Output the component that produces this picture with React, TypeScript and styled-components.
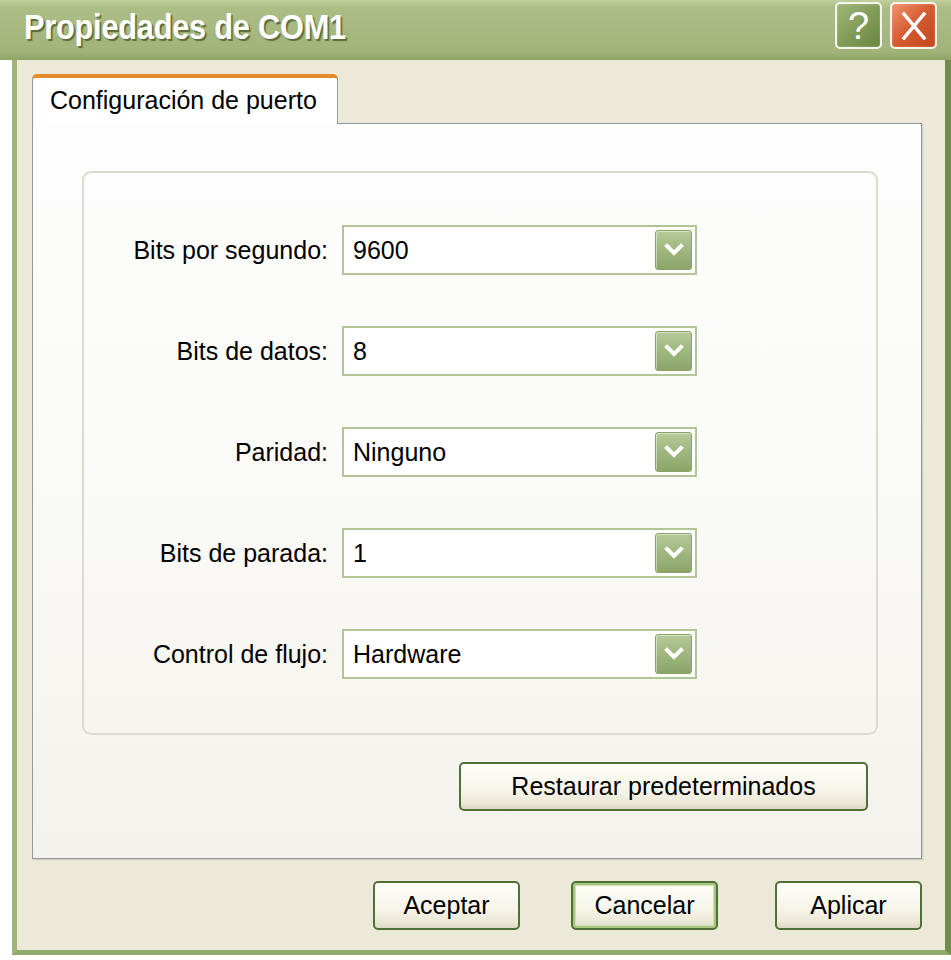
import React from "react";
import styled, { createGlobalStyle } from "styled-components";

const Global = createGlobalStyle`
  html, body { margin: 0; padding: 0; background: #ffffff; overflow: hidden; }
  body { font-family: "Liberation Sans", Arial, sans-serif; }
`;

const Window = styled.div`
  width: 951px;
  display: flex;
  flex-direction: column;
`;

const TitleBar = styled.div`
  height: 60px;
  box-sizing: border-box;
  display: flex;
  align-items: center;
  justify-content: space-between;
  padding: 0 14px 0 24px;
  background: linear-gradient(to bottom, #c2cf9f 0%, #acbd86 12%, #a7b880 50%, #a2b47a 85%, #8ea466 100%);
`;

const TitleText = styled.div`
  font-family: "Liberation Sans", Arial, sans-serif;
  font-weight: bold;
  font-size: 35px;
  color: #ffffff;
  letter-spacing: -0.3px;
  transform: scaleX(0.88);
  transform-origin: left center;
  text-shadow: 2px 2px 1px #5b6b3c;
  white-space: nowrap;
  margin-bottom: 6px;
`;

const Caption = styled.div`
  display: flex;
  gap: 8px;
  align-items: center;
  padding-bottom: 9px;
`;

const CapButton = styled.div<{ $kind: "help" | "close" }>`
  width: 47px;
  height: 47px;
  box-sizing: border-box;
  border: 2px solid #f4f4ea;
  border-radius: 5px;
  display: flex;
  align-items: center;
  justify-content: center;
  color: #ffffff;
  font-family: "Liberation Sans", Arial, sans-serif;
  font-size: 38px;
  line-height: 1;
  background: ${(p) =>
    p.$kind === "help"
      ? "linear-gradient(135deg, #a1b67d 0%, #7f9a55 55%, #6a8542 100%)"
      : "linear-gradient(135deg, #ef946d 0%, #d65a2f 50%, #c2461d 100%)"};
  box-shadow: inset 0 0 2px rgba(255,255,255,0.4);
`;

const Body = styled.div`
  margin-left: 12px;
  width: 939px;
  box-sizing: border-box;
  border-left: 5px solid #a2b47c;
  border-right: 6px solid #6f8e4b;
  border-bottom: 5px solid #90a86c;
  background: #ece9d8;
  padding: 14px 23px 20px 15px;
  display: flex;
  flex-direction: column;
`;

const TabRow = styled.div`
  display: flex;
  position: relative;
  z-index: 2;
  margin-bottom: -1px;
`;

const Tab = styled.div`
  width: 306px;
  height: 50px;
  box-sizing: border-box;
  background: #ffffff;
  border-left: 1px solid #919b9c;
  border-right: 1px solid #919b9c;
  border-top: 4px solid #e68b2c;
  border-radius: 5px 5px 0 0;
  font-size: 25px;
  color: #000;
  padding: 8px 0 0 17px;
`;

const Panel = styled.div`
  height: 736px;
  box-sizing: border-box;
  border: 1px solid #919b9c;
  border-right-color: #8d9596;
  border-bottom-color: #8d9596;
  box-shadow: 1px 1px 0 #d0d0c4, 2px 2px 0 #e3e1d3;
  background: linear-gradient(to bottom, #fdfdfd 0%, #fbfbf9 40%, #f7f6f1 75%, #f3f2ec 100%);
  padding: 47px 43px 0 49px;
  display: flex;
  flex-direction: column;
`;

const Group = styled.div`
  height: 564px;
  box-sizing: border-box;
  border: 2px solid #dcdbcd;
  border-radius: 9px;
  padding-top: 52px;
  display: grid;
  grid-template-columns: 244px 355px;
  column-gap: 14px;
  row-gap: 51px;
  align-content: start;
`;

const Label = styled.div`
  font-size: 25px;
  color: #000;
  text-align: right;
  align-self: center;
  white-space: nowrap;
`;

const Combo = styled.div`
  height: 50px;
  box-sizing: border-box;
  border: 2px solid #b2c594;
  background: #ffffff;
  display: flex;
  align-items: center;
  justify-content: space-between;
  padding: 0 3px 0 9px;
  font-size: 25px;
  color: #000;
`;

const DropButton = styled.div`
  width: 37px;
  height: 40px;
  box-sizing: border-box;
  border: 1px solid #8aa466;
  border-radius: 3px;
  background: linear-gradient(to bottom, #b7ca9a 0%, #9fb77e 50%, #8ba569 100%);
  box-shadow: inset 1px 1px 0 rgba(255,255,255,0.45);
  display: flex;
  align-items: center;
  justify-content: center;
`;

const RestoreRow = styled.div`
  display: flex;
  justify-content: flex-end;
  padding-right: 10px;
  margin-top: 27px;
`;

const PushButton = styled.div<{ $w: number; $default?: boolean }>`
  width: ${(p) => p.$w}px;
  height: 49px;
  box-sizing: border-box;
  border: 2px solid #50703a;
  border-radius: 5px;
  background: linear-gradient(to bottom, #fffff9 0%, #f7f5ea 55%, #ede9d8 85%, #ddd7c2 100%);
  box-shadow: ${(p) =>
    p.$default ? "inset 0 0 0 2px #a9c77f, inset 0 0 0 3px #cfe0b3" : "inset 0 -2px 0 #e2dcc7"};
  display: flex;
  align-items: center;
  justify-content: center;
  font-size: 25px;
  color: #000;
  white-space: nowrap;
`;

const Footer = styled.div`
  display: flex;
  justify-content: flex-end;
  margin-top: 22px;
`;

const FooterButtonWrap = styled.div<{ $gap: number }>`
  margin-left: ${(p) => p.$gap}px;
`;

const Chevron = () => (
  <svg width="20" height="14" viewBox="0 0 20 14">
    <polyline points="3,3 10,10 17,3" fill="none" stroke="#ffffff" strokeWidth="4" strokeLinecap="square" />
  </svg>
);

const CloseX = () => (
  <svg width="26" height="28" viewBox="0 0 26 28">
    <path d="M3 2 L23 26 M23 2 L3 26" stroke="#ffffff" strokeWidth="3.5" strokeLinecap="square" />
  </svg>
);

const rows: [string, string][] = [
  ["Bits por segundo:", "9600"],
  ["Bits de datos:", "8"],
  ["Paridad:", "Ninguno"],
  ["Bits de parada:", "1"],
  ["Control de flujo:", "Hardware"],
];

export default function App() {
  return (
    <>
      <Global />
      <Window>
        <TitleBar>
          <TitleText>Propiedades de COM1</TitleText>
          <Caption>
            <CapButton $kind="help">?</CapButton>
            <CapButton $kind="close">
              <CloseX />
            </CapButton>
          </Caption>
        </TitleBar>
        <Body>
          <TabRow>
            <Tab>Configuración de puerto</Tab>
          </TabRow>
          <Panel>
            <Group>
              {rows.map(([label, value]) => (
                <React.Fragment key={label}>
                  <Label>{label}</Label>
                  <Combo>
                    <span>{value}</span>
                    <DropButton>
                      <Chevron />
                    </DropButton>
                  </Combo>
                </React.Fragment>
              ))}
            </Group>
            <RestoreRow>
              <PushButton $w={409}>Restaurar predeterminados</PushButton>
            </RestoreRow>
          </Panel>
          <Footer>
            <FooterButtonWrap $gap={0}>
              <PushButton $w={147}>Aceptar</PushButton>
            </FooterButtonWrap>
            <FooterButtonWrap $gap={51}>
              <PushButton $w={147} $default>
                Cancelar
              </PushButton>
            </FooterButtonWrap>
            <FooterButtonWrap $gap={57}>
              <PushButton $w={147}>Aplicar</PushButton>
            </FooterButtonWrap>
          </Footer>
        </Body>
      </Window>
    </>
  );
}
